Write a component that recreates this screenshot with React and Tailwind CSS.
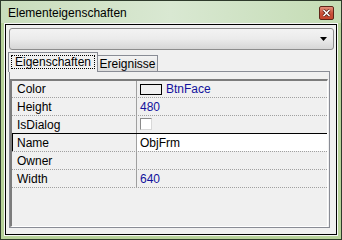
import React from "react";

const rows = [
  { name: "Color", kind: "color", value: "BtnFace" },
  { name: "Height", value: "480", blue: true },
  { name: "IsDialog", kind: "check" },
  { name: "Name", value: "ObjFrm", selected: true },
  { name: "Owner", value: "" },
  { name: "Width", value: "640", blue: true },
];

const Row = ({ row, first, beforeSelected }) => {
  return (
    <div
      className={
        "flex shrink-0 border-b " +
        (first ? "h-[17px] " : "h-[18px] ") +
        (beforeSelected ? "border-solid border-black" : "border-dotted border-[#a0a0a0]")
      }
    >
      <div
        className={
          "w-[125px] flex items-center pl-[5px] border-r border-[#a0a0a0] " +
          (row.selected ? "shadow-[inset_1px_0_0_#000]" : "")
        }
      >
        {row.name}
      </div>
      <div
        className={
          "flex-1 flex items-center pl-[3px] " +
          (row.selected ? "bg-white " : "") +
          (row.blue || row.kind === "color" ? "text-[#12129c]" : "text-black")
        }
      >
        {row.kind === "color" && (
          <>
            <span className="w-[22px] h-[11px] border border-black bg-[#f0f0f0] mr-[4px]" />
            {row.value}
          </>
        )}
        {row.kind === "check" && (
          <span className="self-start mt-[2px] w-[12px] h-[12px] border-t border-l border-[#8a8a8a] border-r border-b border-r-[#d8d8d8] border-b-[#d8d8d8] bg-white" />
        )}
        {!row.kind && row.value}
      </div>
    </div>
  );
};

export default function App() {
  return (
    <div className="w-[342px] h-[240px] border border-[#2e3a2b] bg-[#b7d29a] flex flex-col font-['Liberation_Sans',Arial,sans-serif] text-[12px] text-black overflow-hidden">
      {/* title bar */}
      <div className="h-[22px] shrink-0 flex items-center pl-[7px] pr-[7px] bg-gradient-to-r from-[#c9ddbc] via-[#d9e8d2] to-[#c4dcb4]">
        <span className="mt-[1px]">Elementeigenschaften</span>
        <div className="ml-auto mt-[1px] w-[15px] h-[14px] rounded-[2px] border border-[#5e2418] bg-gradient-to-b from-[#e3907c] via-[#c9503a] to-[#c4452c] flex items-center justify-center">
          <svg width="9" height="8" viewBox="0 0 9 8">
            <path d="M1.5 1 L7.5 7 M7.5 1 L1.5 7" stroke="#4a1a12" strokeWidth="3" />
            <path d="M1.5 1 L7.5 7 M7.5 1 L1.5 7" stroke="#ffffff" strokeWidth="1.6" />
          </svg>
        </div>
      </div>

      {/* frame */}
      <div className="flex-1 mx-[3px] mb-[3px] border border-[#f7f7f7] flex flex-col">
        <div className="flex-1 border border-black bg-[#f0f0f0] flex flex-col">
          {/* combobox */}
          <div className="mt-[3px] ml-[3px] mr-[2px] h-[22px] shrink-0 rounded-[3px] border border-[#8c8c8c] bg-gradient-to-b from-[#f3f3f3] via-[#ebebeb] to-[#d6d6d6] flex items-center justify-end pr-[5px]">
            <svg width="8" height="5" viewBox="0 0 8 5">
              <path d="M0 0 H7 L3.5 4 Z" fill="#000" />
            </svg>
          </div>

          {/* tabs */}
          <div className="mt-[2px] ml-[2px] flex items-end shrink-0 h-[19px]">
            <div className="relative z-10 -mb-px h-[20px] w-[90px] border border-b-0 border-[#898c95] bg-[#f0f0f0] pt-[2px] px-[2px]">
              <div className="h-[14px] border border-dotted border-black flex items-center justify-center">
                Eigenschaften
              </div>
            </div>
            <div className="h-[16px] w-[60px] border border-b-0 border-l-0 border-[#898c95] bg-gradient-to-b from-[#f3f3f3] to-[#dddddd] flex items-center justify-center">
              Ereignisse
            </div>
          </div>

          {/* panel */}
          <div className="ml-[3px] w-[321px] flex-1 mb-[6px] border border-[#898c95] bg-[#f0f0f0] pt-[7px] pr-[1px] flex flex-col">
            <div className="flex-1 border-t-2 border-l-2 border-[#7c7c7c] border-r border-b border-r-white border-b-white flex flex-col">
              {rows.map((row, i) => (
                <Row
                  key={row.name}
                  row={row}
                  first={i === 0}
                  beforeSelected={rows[i + 1] && rows[i + 1].selected}
                />
              ))}
            </div>
          </div>
        </div>
      </div>
    </div>
  );
}
